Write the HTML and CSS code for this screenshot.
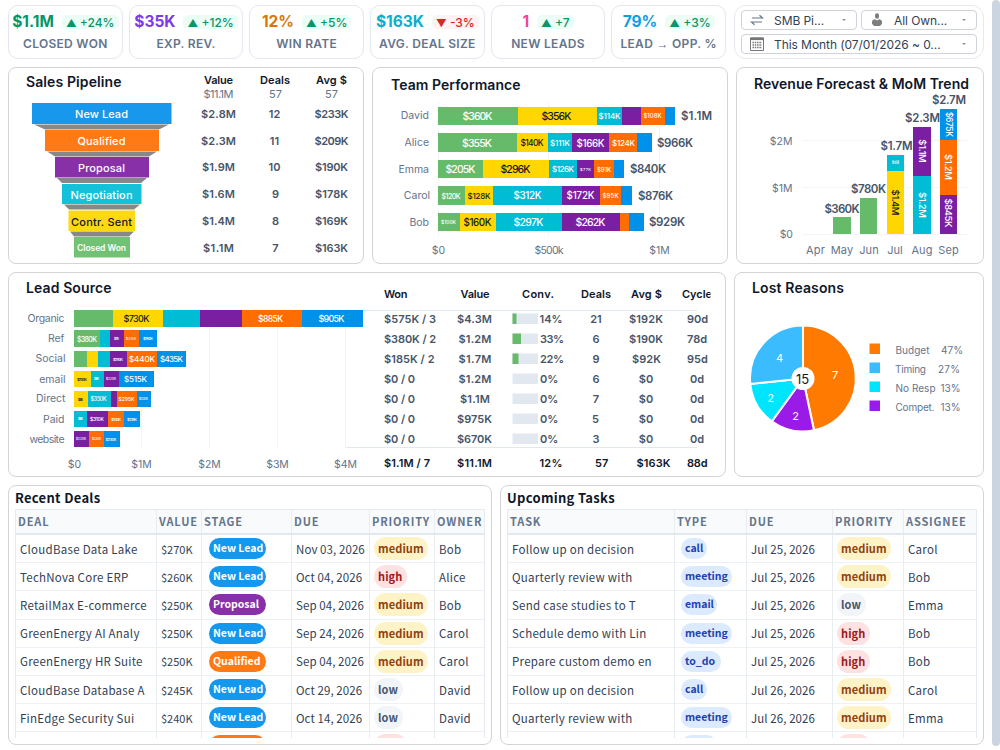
FILE: index.html
```html
<!DOCTYPE html>
<html lang="en">
<head>
<meta charset="utf-8">
<title>Sales Dashboard</title>
<link rel="stylesheet" href="styles.css">
</head>
<body>
<main class="page">
  <header class="top">
    <section class="kpis">
      <div class="kpi"><div class="kpi-line"><b class="num green">$1.1M</b><span class="badge up"><i>▲</i> +24%</span></div><div class="kpi-label">CLOSED WON</div></div>
      <div class="kpi"><div class="kpi-line"><b class="num violet">$35K</b><span class="badge up"><i>▲</i> +12%</span></div><div class="kpi-label">EXP. REV.</div></div>
      <div class="kpi"><div class="kpi-line"><b class="num amber">12%</b><span class="badge up"><i>▲</i> +5%</span></div><div class="kpi-label">WIN RATE</div></div>
      <div class="kpi"><div class="kpi-line"><b class="num cyan">$163K</b><span class="badge down"><i>▼</i> -3%</span></div><div class="kpi-label tight">AVG. DEAL SIZE</div></div>
      <div class="kpi"><div class="kpi-line"><b class="num pink">1</b><span class="badge up"><i>▲</i> +7</span></div><div class="kpi-label tight">NEW LEADS</div></div>
      <div class="kpi"><div class="kpi-line"><b class="num sky">79%</b><span class="badge up"><i>▲</i> +3%</span></div><div class="kpi-label tight">LEAD <span class="arrow">→</span> OPP. %</div></div>
    </section>
    <section class="filters">
      <div class="select"><svg class="ico" viewBox="0 0 14 14"><path d="M2 5H12.5L9.5 2.3M12 9H1.500L4.500 11.700" fill="none" stroke="#64748b" stroke-width="1.200"/></svg><span>SMB Pi...</span><i class="caret"></i></div>
      <div class="select"><svg class="ico" viewBox="0 0 14 14"><path d="M5 2.300a2 2 0 0 1 4 0v1.500a2 2 0 0 1-4 0zM2 10.500V8.600Q2.200 6.600 5 6.300L7 7.500 9 6.300Q11.800 6.600 12 8.600V10.500Q11 12.800 9.500 13H4.500Q3 12.800 2 10.500z" fill="#7d7d7d"/></svg><span>All Own...</span><i class="caret"></i></div>
      <div class="select wide"><svg class="ico" viewBox="0 0 14 14"><path d="M.5 1H13.500V13.500H.5z" fill="none" stroke="#777"/><path d="M.5 .5h13v2.600H.5z" fill="#777"/><path d="M2.500 5.500h9.500M2.500 8h9.500M2.500 10.500h9.500" stroke="#777" stroke-width="1.500" stroke-dasharray="1.500 .8"/></svg><span>This Month (07/01/2026 ~ 0...</span><i class="caret"></i></div>
    </section>
  </header>

  <div class="row charts">
    <section class="panel pipeline">
      <svg viewBox="9 68 354 195">
        <text class="title" x="26" y="87" textLength="95.500">Sales Pipeline</text>
        <g fill="#888">
          <path d="M34 124.500H169L159 129.500H45z"/><path d="M47 151.500H157L149 156.500H55z"/><path d="M57 178H147L141 183H62z"/><path d="M64 204.500H140L134 209.500H69z"/><path d="M70 231.500H134L129 236.500H74z"/>
        </g>
        <rect x="32" y="103" width="139.500" height="21" fill="#1798ec"/>
        <rect x="45" y="130" width="114" height="21" fill="#ff7a14"/>
        <rect x="55" y="157" width="94" height="20.500" fill="#8730a8"/>
        <rect x="62" y="184" width="79.500" height="20" fill="#15c1d8"/>
        <rect x="68.500" y="210.500" width="66.500" height="20.500" fill="#fdd814"/>
        <rect x="74" y="237" width="56" height="20.500" fill="#72c276"/>
        <g class="stage-name mid">
          <text x="101.500" y="118" textLength="53">New Lead</text><text x="101.500" y="144.500" textLength="48">Qualified</text><text x="101.500" y="171.500" textLength="47">Proposal</text><text x="101.500" y="198.500" textLength="62">Negotiation</text><text class="dark" x="101.500" y="225.500" textLength="61">Contr. Sent</text><text class="small" x="101.500" y="251" textLength="49">Closed Won</text>
        </g>
        <g class="th mid"><text x="218.500" y="84" textLength="29">Value</text><text x="275" y="84" textLength="30">Deals</text><text x="331.500" y="84" textLength="31">Avg $</text></g>
        <g class="sum mid"><text x="218.500" y="98" textLength="30">$11.1M</text><text x="275.500" y="98">57</text><text x="331.500" y="98">57</text></g>
        <g class="td mid">
          <text x="218.500" y="118" textLength="35">$2.8M</text><text x="274.500" y="118">12</text><text x="331.500" y="118" textLength="34">$233K</text>
          <text x="218.500" y="144.500" textLength="35">$2.3M</text><text x="274.500" y="144.500">11</text><text x="331.500" y="144.500" textLength="34">$209K</text>
          <text x="218.500" y="171" textLength="33">$1.9M</text><text x="274.500" y="171">10</text><text x="331.500" y="171" textLength="33">$190K</text>
          <text x="218.500" y="198" textLength="33">$1.6M</text><text x="275.500" y="198">9</text><text x="331.500" y="198" textLength="33">$178K</text>
          <text x="218.500" y="225" textLength="33">$1.4M</text><text x="275.500" y="225">8</text><text x="331.500" y="225" textLength="33">$169K</text>
          <text x="218.500" y="252" textLength="31">$1.1M</text><text x="275.500" y="252">7</text><text x="331.500" y="252" textLength="33">$163K</text>
        </g>
      </svg>
    </section>

    <section class="panel team">
      <svg viewBox="373 68 354 195">
        <text class="title" x="391" y="89.500" textLength="129.500">Team Performance</text>
        <path class="gridline" d="M438.500 102V236M548.500 102V236M659.500 102V236"/>
        <g class="axis end"><text x="429" y="119">David</text><text x="429" y="146">Alice</text><text x="429" y="172.500">Emma</text><text x="430" y="199">Carol</text><text x="429" y="225.500">Bob</text></g>
        <g class="c-green"><path d="M438 107h80v18h-80zM438 133h79v19h-79zM438 160h45v18h-45zM438 186h27v19h-27zM438 213h22v18h-22z"/></g>
        <g class="c-yellow"><path d="M518 107h79v18h-79zM517 133h31v19h-31zM483 160h66v18h-66zM465 186h28v19h-28zM460 213h36v18h-36z"/></g>
        <g class="c-cyan"><path d="M597 107h25v18h-25zM548 133h24v19h-24zM549 160h28v18h-28zM493 186h69v19h-69zM496 213h66v18h-66z"/></g>
        <g class="c-purple"><path d="M622 107h19v18h-19zM572 133h37v19h-37zM577 160h17v18h-17zM562 186h38v19h-38zM562 213h58v18h-58z"/></g>
        <g class="c-orange"><path d="M641 107h24v18h-24zM609 133h28v19h-28zM594 160h20v18h-20zM600 186h21v19h-21zM620 213h9v18h-9z"/></g>
        <g class="c-blue"><path d="M665 107h10v18h-10zM637 133h15v19h-15zM614 160h10v18h-10zM621 186h11v19h-11zM629 213h15v18h-15z"/></g>
        <g class="bar-label mid">
          <text x="477.500" y="120" textLength="30">$360K</text><text class="dark" x="556.500" y="120" textLength="30">$356K</text><text class="s8" x="609.500" y="118.500" textLength="22">$114K</text><text class="s6" x="652.500" y="118" textLength="18">$108K</text>
          <text x="477" y="146.500" textLength="30">$355K</text><text class="s85 dark" x="532" y="146" textLength="23">$140K</text><text class="s8" x="560" y="146" textLength="20">$111K</text><text class="s10" x="590.500" y="146.500" textLength="28">$166K</text><text class="s8" x="623.500" y="145.500" textLength="23">$124K</text>
          <text x="460.500" y="172.500" textLength="30">$205K</text><text class="dark" x="515.500" y="172.500" textLength="30">$296K</text><text class="s8" x="563" y="172" textLength="22">$126K</text><text class="s4" x="585.500" y="170.500" textLength="11">$77K</text><text class="s6" x="604" y="171.500" textLength="14">$91K</text>
          <text class="s7" x="451" y="198.500" textLength="19">$120K</text><text class="s8 dark" x="479" y="198.500" textLength="23">$128K</text><text class="s10" x="527.500" y="199" textLength="28">$312K</text><text class="s10" x="580.500" y="199" textLength="28">$172K</text><text class="s6" x="610.500" y="197.500" textLength="16">$95K</text>
          <text class="s5" x="448.500" y="224" textLength="15">$100K</text><text class="s10 dark" x="477.500" y="225.500" textLength="28">$160K</text><text x="528.500" y="225.500" textLength="30">$297K</text><text x="590.500" y="225.500" textLength="30">$262K</text>
        </g>
        <g class="td big"><text x="681" y="120" textLength="31">$1.1M</text><text x="657" y="146.500" textLength="36">$966K</text><text x="630" y="173" textLength="36">$840K</text><text x="638" y="199.500" textLength="35">$876K</text><text x="649" y="226" textLength="36">$929K</text></g>
        <g class="axis mid"><text x="438.500" y="254">$0</text><text x="549" y="254" textLength="29">$500k</text><text x="659.500" y="254">$1M</text></g>
      </svg>
    </section>

    <section class="panel revenue">
      <svg viewBox="737 68 246 195">
        <text class="title" x="754" y="89" textLength="215">Revenue Forecast &amp; MoM Trend</text>
        <path class="gridline" d="M802 140.500H968M802 187.500H968M802 234.500H968"/>
        <g class="axis end"><text x="792.500" y="144.500">$2M</text><text x="792.500" y="191.500">$1M</text><text x="793" y="238">$0</text></g>
        <g class="axis mon mid"><text x="815.500" y="254">Apr</text><text x="842" y="254">May</text><text x="869" y="254">Jun</text><text x="895" y="254">Jul</text><text x="922" y="254">Aug</text><text x="948.500" y="254">Sep</text></g>
        <path class="c-green" d="M833 217h18v17h-18zM860 198h17v36h-17z"/>
        <path class="c-yellow" d="M887 171h17v63h-17z"/>
        <path class="c-cyan" d="M887 155h17v16h-17zM913 176h18v58h-18z"/>
        <path class="c-purple" d="M913 127h18v49h-18zM940 195h17v39h-17z"/>
        <path class="c-orange" d="M940 140h17v55h-17z"/>
        <path class="c-blue" d="M940 109h17v31h-17z"/>
        <g class="td big mid"><text x="842" y="212.500" textLength="35">$360K</text><text x="868.500" y="193" textLength="35">$780K</text><text x="896.500" y="150" textLength="32">$1.7M</text><text x="922.500" y="122" textLength="35">$2.3M</text><text x="949" y="104" textLength="34">$2.7M</text></g>
        <g class="bar-label turned mid">
          <text class="dark" transform="translate(891.500 202.500) rotate(90)" textLength="26">$1.4M</text>
          <text transform="translate(891.500 162.500) rotate(90)" textLength="4" lengthAdjust="spacingAndGlyphs">$310K</text>
          <text transform="translate(918.500 151) rotate(90)" textLength="23.500">$1.1M</text>
          <text transform="translate(918.500 205) rotate(90)" textLength="26">$1.2M</text>
          <text class="s85" transform="translate(945.500 124.500) rotate(90)" textLength="25">$675K</text>
          <text transform="translate(945 167) rotate(90)" textLength="26">$1.2M</text>
          <text transform="translate(945 213) rotate(90)" textLength="29">$845K</text>
        </g>
      </svg>
    </section>
  </div>

  <div class="row sources">
    <section class="panel lead">
      <svg viewBox="9 273 716 203">
        <text class="title" x="26" y="293" textLength="85.500">Lead Source</text>
        <path class="gridline" d="M141.500 310V448M209.500 310V448M277.500 310V448M345.500 310V448"/>
        <path class="rule" d="M346 310.500H697M346 447.500H697"/>
        <g class="axis end"><text x="64.500" y="322" textLength="37">Organic</text><text x="64.500" y="342">Ref</text><text x="65.500" y="362">Social</text><text x="65.500" y="382.500">email</text><text x="65.500" y="402">Direct</text><text x="64.500" y="422.500">Paid</text><text x="64.500" y="442.500" textLength="35">website</text></g>
        <path class="c-green" d="M74 310h39v17h-39zM74 330h26v17h-26zM74 351h13v16h-13z"/>
        <path class="c-yellow" d="M113 310h50v17h-50zM87 351h11v16h-11zM74 371h17v16h-17zM74 391h14v16h-14z"/>
        <path class="c-cyan" d="M163 310h37v17h-37zM100 330h10v17h-10zM98 351h12v16h-12zM91 371h13v16h-13zM88 391h23v16h-23zM74 411h13v16h-13z"/>
        <path class="c-purple" d="M200 310h42v17h-42zM110 330h14v17h-14zM110 351h17v16h-17zM104 371h15v16h-15zM111 391h6v16h-6zM87 411h21v16h-21zM74 431h15v16h-15z"/>
        <path class="c-orange" d="M242 310h60v17h-60zM124 330h15v17h-15zM127 351h30v16h-30zM117 391h20v16h-20zM108 411h16v16h-16zM89 431h15v16h-15z"/>
        <path class="c-blue" d="M302 310h61v17h-61zM139 330h18v17h-18zM157 351h29v16h-29zM119 371h35v16h-35zM137 391h14v16h-14zM124 411h16v16h-16zM104 431h16v16h-16z"/>
        <g class="bar-label s9 mid">
          <text class="dark" x="136.500" y="322" textLength="26">$730K</text><text class="s85" x="270.500" y="322" textLength="25">$885K</text><text x="331.500" y="322" textLength="26">$905K</text>
          <text class="s7" x="87" y="341.500" textLength="20">$380K</text><text class="s3" x="116.500" y="340" textLength="5">$70K</text><text class="s3" x="131" y="340" textLength="10">$215K</text><text class="s4" x="148" y="340" textLength="10">$260K</text>
          <text class="s4" x="118" y="360.500" textLength="10">$250K</text><text class="s8" x="142" y="361.500" textLength="26">$440K</text><text class="s8" x="171.500" y="361.500" textLength="23">$435K</text>
          <text class="s4 dark" x="82" y="380.500" textLength="10">$250K</text><text class="s3" x="96.500" y="380" textLength="5">$195K</text><text class="s3" x="111" y="380" textLength="10">$220K</text><text class="s8" x="135.500" y="382" textLength="23">$515K</text>
          <text class="s3 dark" x="80.500" y="400.500" textLength="5">$200K</text><text class="s55" x="98.500" y="401" textLength="16">$350K</text><text class="s5" x="126.500" y="400.500" textLength="16">$295K</text><text class="s3" x="143.500" y="400" textLength="9">$200K</text>
          <text class="s3" x="80.500" y="420" textLength="5">$190K</text><text class="s5" x="97" y="421" textLength="14">$310K</text><text class="s4" x="116" y="420.500" textLength="10">$240K</text><text class="s4" x="132" y="420.500" textLength="10">$235K</text>
          <text class="s3" x="81" y="440" textLength="10">$220K</text><text class="s3" x="96.500" y="440" textLength="9">$220K</text><text class="s4" x="111" y="440.500" textLength="11">$230K</text>
        </g>
        <g class="axis mid"><text x="74.500" y="468">$0</text><text x="141.500" y="468">$1M</text><text x="209.500" y="468">$2M</text><text x="277.500" y="468">$3M</text><text x="345.500" y="468">$4M</text></g>
        <clipPath id="edge"><path d="M370 280H710.500V476H370z"/></clipPath>
        <g class="th" clip-path="url(#edge)"><text x="384" y="298" textLength="23.500">Won</text><text x="460.500" y="298" textLength="29">Value</text><text x="522" y="298" textLength="32">Conv.</text><text x="581" y="298" textLength="30">Deals</text><text x="631" y="298" textLength="31">Avg $</text><text x="682" y="298" textLength="30">Cycle</text></g>
        <path fill="#e2e8f0" d="M512.500 313.500h25.500v10.500h-25.500zM512.500 333.500h25.500v10.500h-25.500zM512.500 353.500h25.500v10.500h-25.500zM512.500 373.500h25.500v10.500h-25.500zM512.500 393.500h25.500v10.500h-25.500zM512.500 413.500h25.500v10.500h-25.500zM512.500 433.500h25.500v10.500h-25.500z"/>
        <path class="c-green" d="M512.500 313.500h4v10.500h-4zM512.500 333.500h8.500v10.500h-8.500zM512.500 353.500h6v10.500h-6z"/>
        <g class="td"><text x="384" y="323" textLength="52">$575K / 3</text><text x="384" y="343" textLength="52">$380K / 2</text><text x="384" y="363" textLength="50.500">$185K / 2</text><text x="384" y="383" textLength="31">$0 / 0</text><text x="384" y="403" textLength="31">$0 / 0</text><text x="384" y="423" textLength="31">$0 / 0</text><text x="384" y="443" textLength="31">$0 / 0</text>
        <text x="539.500" y="323" textLength="23">14%</text><text x="540" y="343" textLength="24">33%</text><text x="540" y="363" textLength="24">22%</text><text x="540" y="383">0%</text><text x="540" y="403">0%</text><text x="540" y="423">0%</text><text x="540" y="443">0%</text></g>
        <g class="td mid">
          <text x="474.500" y="323" textLength="35">$4.3M</text><text x="475" y="343" textLength="33">$1.2M</text><text x="475" y="363" textLength="33">$1.7M</text><text x="475" y="383" textLength="33">$1.2M</text><text x="475" y="403" textLength="30">$1.1M</text><text x="474.500" y="423" textLength="35">$975K</text><text x="474.500" y="443" textLength="35">$670K</text>
          <text x="596" y="323">21</text><text x="596" y="343">6</text><text x="596" y="363">9</text><text x="596" y="383">6</text><text x="596" y="403">7</text><text x="595.500" y="423">5</text><text x="596" y="443">3</text>
          <text x="646" y="323" textLength="34">$192K</text><text x="646" y="343" textLength="34">$190K</text><text x="646.500" y="363" textLength="29">$92K</text><text x="646" y="383">$0</text><text x="646" y="403">$0</text><text x="646" y="423">$0</text><text x="646" y="443">$0</text>
          <text x="697.500" y="323">90d</text><text x="697" y="343">78d</text><text x="697.500" y="363">95d</text><text x="697" y="383">0d</text><text x="697" y="403">0d</text><text x="697" y="423">0d</text><text x="697" y="443">0d</text>
        </g>
        <g class="th"><text x="384" y="467" textLength="46">$1.1M / 7</text><text x="457" y="467" textLength="35">$11.1M</text><text x="539.500" y="467" textLength="23">12%</text><text x="595" y="467">57</text><text x="636.500" y="467" textLength="34">$163K</text><text x="687" y="467" textLength="20.500">88d</text></g>
      </svg>
    </section>

    <section class="panel lost">
      <svg viewBox="735 273 248 203">
        <text class="title" x="752" y="293" textLength="92">Lost Reasons</text>
        <g stroke="#fff" stroke-width="2">
          <path fill="#ff7a00" d="M803 378.500V325.500A53 53 0 0 1 814 430.300z"/>
          <path fill="#9a1be8" d="M803 378.500L814 430.300A53 53 0 0 1 771.800 421.400z"/>
          <path fill="#00e5ff" d="M803 378.500L771.800 421.400A53 53 0 0 1 750.300 384z"/>
          <path fill="#3bbcff" d="M803 378.500L750.300 384A53 53 0 0 1 803 325.500z"/>
        </g>
        <circle cx="803" cy="378.500" r="11.500" fill="#fff"/>
        <text class="center mid" x="802.500" y="383.500">15</text>
        <g class="slice mid"><text x="835" y="378.500">7</text><text x="795.500" y="419.500">2</text><text x="770.500" y="401.500">2</text><text x="779.500" y="362">4</text></g>
        <path fill="#ff7a00" d="M869.500 343.500h10.500v10.500h-10.500z"/><path fill="#3bbcff" d="M869.500 362.500h10.500v10.500h-10.500z"/><path fill="#00e5ff" d="M869.500 381.500h10.500v10.500h-10.500z"/><path fill="#9a1be8" d="M869.500 400.500h10.500v10.500h-10.500z"/>
        <g class="legend"><text x="895.500" y="354" textLength="34">Budget</text><text x="941" y="354" textLength="22">47%</text><text x="895" y="373" textLength="31">Timing</text><text x="938" y="373" textLength="22">27%</text><text x="895.500" y="392" textLength="40">No Resp</text><text x="940.500" y="392" textLength="20">13%</text><text x="895.500" y="411" textLength="39">Compet.</text><text x="940.500" y="411" textLength="20">13%</text></g>
      </svg>
    </section>
  </div>

  <div class="row lists">
    <section class="panel list">
      <h2>Recent Deals</h2>
      <div class="table deals">
        <div class="tr head"><span>DEAL</span><span>VALUE</span><span>STAGE</span><span>DUE</span><span>PRIORITY</span><span>OWNER</span></div>
        <div class="tr"><span>CloudBase Data Lake</span><span class="money">$270K</span><span><em class="pill new">New Lead</em></span><span class="date">Nov 03, 2026</span><span><em class="prio medium">medium</em></span><span>Bob</span></div>
        <div class="tr"><span>TechNova Core ERP</span><span class="money">$260K</span><span><em class="pill new">New Lead</em></span><span class="date">Oct 04, 2026</span><span><em class="prio high">high</em></span><span>Alice</span></div>
        <div class="tr"><span>RetailMax E-commerce</span><span class="money">$250K</span><span><em class="pill proposal">Proposal</em></span><span class="date">Sep 04, 2026</span><span><em class="prio medium">medium</em></span><span>Bob</span></div>
        <div class="tr"><span>GreenEnergy AI Analy</span><span class="money">$250K</span><span><em class="pill new">New Lead</em></span><span class="date">Sep 24, 2026</span><span><em class="prio medium">medium</em></span><span>Carol</span></div>
        <div class="tr"><span>GreenEnergy HR Suite</span><span class="money">$250K</span><span><em class="pill qualified">Qualified</em></span><span class="date">Sep 04, 2026</span><span><em class="prio medium">medium</em></span><span>Carol</span></div>
        <div class="tr"><span>CloudBase Database A</span><span class="money">$245K</span><span><em class="pill new">New Lead</em></span><span class="date">Oct 29, 2026</span><span><em class="prio low">low</em></span><span>David</span></div>
        <div class="tr"><span>FinEdge Security Sui</span><span class="money">$240K</span><span><em class="pill new">New Lead</em></span><span class="date">Oct 14, 2026</span><span><em class="prio low">low</em></span><span>David</span></div>
        <div class="tr"><span></span><span></span><span><em class="pill qualified"></em></span><span></span><span><em class="prio high"></em></span><span></span></div>
      </div>
    </section>
    <section class="panel list">
      <h2>Upcoming Tasks</h2>
      <div class="table tasks">
        <div class="tr head"><span>TASK</span><span>TYPE</span><span>DUE</span><span>PRIORITY</span><span>ASSIGNEE</span></div>
        <div class="tr"><span>Follow up on decision</span><span><em class="type call">call</em></span><span class="date">Jul 25, 2026</span><span><em class="prio medium">medium</em></span><span>Carol</span></div>
        <div class="tr"><span>Quarterly review with</span><span><em class="type meeting">meeting</em></span><span class="date">Jul 25, 2026</span><span><em class="prio medium">medium</em></span><span>Bob</span></div>
        <div class="tr"><span>Send case studies to T</span><span><em class="type email">email</em></span><span class="date">Jul 25, 2026</span><span><em class="prio low">low</em></span><span>Emma</span></div>
        <div class="tr"><span>Schedule demo with Lin</span><span><em class="type meeting">meeting</em></span><span class="date">Jul 25, 2026</span><span><em class="prio high">high</em></span><span>Bob</span></div>
        <div class="tr"><span>Prepare custom demo en</span><span><em class="type todo">to_do</em></span><span class="date">Jul 25, 2026</span><span><em class="prio high">high</em></span><span>Bob</span></div>
        <div class="tr"><span>Follow up on decision</span><span><em class="type call">call</em></span><span class="date">Jul 26, 2026</span><span><em class="prio medium">medium</em></span><span>Carol</span></div>
        <div class="tr"><span>Quarterly review with</span><span><em class="type meeting">meeting</em></span><span class="date">Jul 26, 2026</span><span><em class="prio medium">medium</em></span><span>Emma</span></div>
        <div class="tr"><span></span><span><em class="type email"></em></span><span></span><span><em class="prio high"></em></span><span></span></div>
      </div>
    </section>
  </div>
</main>
<div class="scrollbar"></div>
</body>
</html>
```

FILE: styles.css
```css
* { box-sizing: border-box; }
body {
  margin: 0;
  width: 1000px;
  height: 750px;
  overflow: hidden;
  background: #fff;
  font-family: Inter, "Liberation Sans", sans-serif;
  display: flex;
}
.page { width: 992px; padding: 5px 8px 0; display: flex; flex-direction: column; gap: 8px; }
.scrollbar { width: 8px; height: 746px; border-radius: 4px; background: #cbd5e1; }

/* KPI strip */
.top { height: 54px; display: flex; gap: 8px; }
.kpis { width: 718px; display: grid; grid-template-columns: repeat(6, 1fr); gap: 6px; }
.kpi { border: 1px solid #e2e6ef; border-radius: 10px; padding-top: 6px; }
.kpi-line { height: 19px; display: flex; justify-content: center; align-items: center; gap: 8px; }
.num { font-size: 15.5px; font-weight: 700; line-height: 19px; }
.badge { height: 14px; padding: 0 4px; border-radius: 5px; font-size: 12px; line-height: 15px; font-weight: 500; white-space: pre; }
.badge i { font-style: normal; font-size: 10.5px; }
.up { background: #ecfdf5; color: #059669; }
.down { background: #fef2f2; color: #dc2626; }
.green { color: #059669; }
.violet { color: #7c3aed; }
.amber { color: #d97706; }
.cyan { color: #06b0ce; }
.pink { color: #ec4899; }
.sky { color: #0e9ee6; }
.kpi-label { margin-top: 5px; text-align: center; font-size: 12px; line-height: 16px; font-weight: 600; letter-spacing: .3px; color: #64748b; white-space: nowrap; }
.kpi-label.tight { letter-spacing: .3px; }
.arrow { font-family: "Liberation Sans", sans-serif; font-weight: 400; line-height: 1; }

.filters { width: 250px; border: 1px solid #e6eaf0; border-radius: 12px; padding: 4px 6px; display: grid; grid-template-columns: 1fr 1fr; grid-template-rows: 20px 20px; gap: 4px; }
.select { border: 1px solid #cfd3dc; border-radius: 4px; display: flex; align-items: center; padding: 0 10px 0 8px; font-size: 12px; color: #334155; }
.select span { flex: 1; margin-left: 10px; white-space: nowrap; letter-spacing: -.07px; }
.wide { grid-column: span 2; }
.ico { width: 14px; height: 14px; display: block; }
.caret { border: 2.5px solid transparent; border-top: 2.5px solid #8292a8; border-bottom: 0; }

/* Panels */
.row { display: flex; gap: 8px; }
.charts { height: 197px; }
.sources { height: 205px; }
.lists { height: 260px; }
.panel { border: 1px solid #d4d4d4; border-radius: 8px; overflow: hidden; background: #fff; }
.panel > svg { display: block; width: 100%; height: 100%; }
.pipeline, .team { width: 356px; }
.revenue { width: 248px; }
.lead { width: 718px; }
.lost { width: 250px; }
.list { width: 484px; padding: 0 6px; }

/* Chart text */
.title { font-size: 14px; font-weight: 600; fill: #0f172a; }
.mid { text-anchor: middle; }
.end { text-anchor: end; }
.th { font-size: 11px; font-weight: 600; fill: #0f172a; }
.td { font-size: 11px; font-weight: 600; fill: #475569; }
.td.big { font-size: 11.5px; }
.sum { font-size: 11px; fill: #64748b; }
.axis { font-size: 10.5px; fill: #64748b; }
.axis.mon { font-size: 11px; letter-spacing: .1px; }
.stage-name { font-size: 11px; font-weight: 500; fill: #fff; }
.small { font-size: 8.5px; font-weight: 600; }
.bar-label { font-size: 10.5px; font-weight: 500; fill: #fff; }
.bar-label.turned { font-size: 9.5px; }
.dark { fill: #111827; }
.s10 { font-size: 9.8px; }
.s9 { font-size: 9px; }
.s85 { font-size: 8.5px; }
.s8 { font-size: 8px; }
.s7 { font-size: 7px; }
.s6 { font-size: 6px; }
.s55 { font-size: 5.5px; }
.s5 { font-size: 5px; }
.s4 { font-size: 4px; }
.s3 { font-size: 3px; }
.center { font-size: 13px; fill: #111827; }
.slice { font-size: 11px; fill: #fff; }
.legend { font-size: 10px; fill: #64748b; }
.gridline { fill: none; stroke: #f1f4f8; }
.rule { fill: none; stroke: #e2e8f0; }
.c-green { fill: #66bb6a; }
.c-yellow { fill: #ffd600; }
.c-cyan { fill: #00bcd4; }
.c-purple { fill: #7b1fa2; }
.c-orange { fill: #ff6d00; }
.c-blue { fill: #0091ea; }

/* Tables */
.list { font-family: "Noto Sans CJK SC", "Noto Sans", sans-serif; }
.list h2 { margin: 0; height: 23px; font-size: 13px; line-height: 23px; font-weight: 700; letter-spacing: .3px; color: #0f172a; }
.table { width: 470px; height: 229px; overflow: hidden; border: 1px solid #e5eaf0; border-bottom: 0; }
.tr { display: grid; height: 28.2px; }
.deals .tr { grid-template-columns: 141px 45px 90px 78px 65px 49px; }
.tasks .tr { grid-template-columns: 167px 72px 86px 71px 72px; }
.tr > span { border-right: 1px solid #e8edf2; border-bottom: 1px solid #edf1f5; padding-left: 4px; font-size: 11.5px; line-height: 28px; letter-spacing: .26px; color: #334155; white-space: nowrap; overflow: hidden; display: flex; align-items: center; }
.tr > span:last-child { border-right: 0; }
.tr > .money { font-size: 11px; letter-spacing: 0; }
.tr > .date { letter-spacing: .08px; }
.tr.head { height: 25px; background: #f8fafc; border-bottom: 2px solid #e2e8f0; }
.tr.head > span { padding-left: 2px; border-bottom: 0; font-size: 11px; line-height: 23px; font-weight: 700; letter-spacing: .85px; color: #64748b; }
.tr em { font-style: normal; font-weight: 700; display: block; }
.pill { width: 57px; height: 21px; margin-left: 3px; padding-left: 4px; border-radius: 11px; line-height: 20px; color: #fff; letter-spacing: 0; font-size: 10.5px; }
.new { background: #1398ee; }
.proposal { background: #8730a8; }
.qualified { background: #ff7a14; }
.prio { height: 23px; padding: 0 5px 0 4px; border-radius: 12px; line-height: 22px; font-size: 11px; letter-spacing: .1px; }
.medium { width: 54px; background: #fef3c7; color: #92400e; }
.high { width: 33px; background: #fee2e2; color: #991b1b; }
.low { width: 29px; background: #f1f5f9; color: #475569; }
.type { height: 21px; margin-left: 2px; padding-left: 4px; border-radius: 11px; line-height: 20px; font-size: 10.5px; letter-spacing: 0; background: #dbeafe; color: #1e40af; }
.call { width: 26px; }
.meeting { width: 51px; }
.email { width: 36px; }
.todo { width: 40px; }
```
